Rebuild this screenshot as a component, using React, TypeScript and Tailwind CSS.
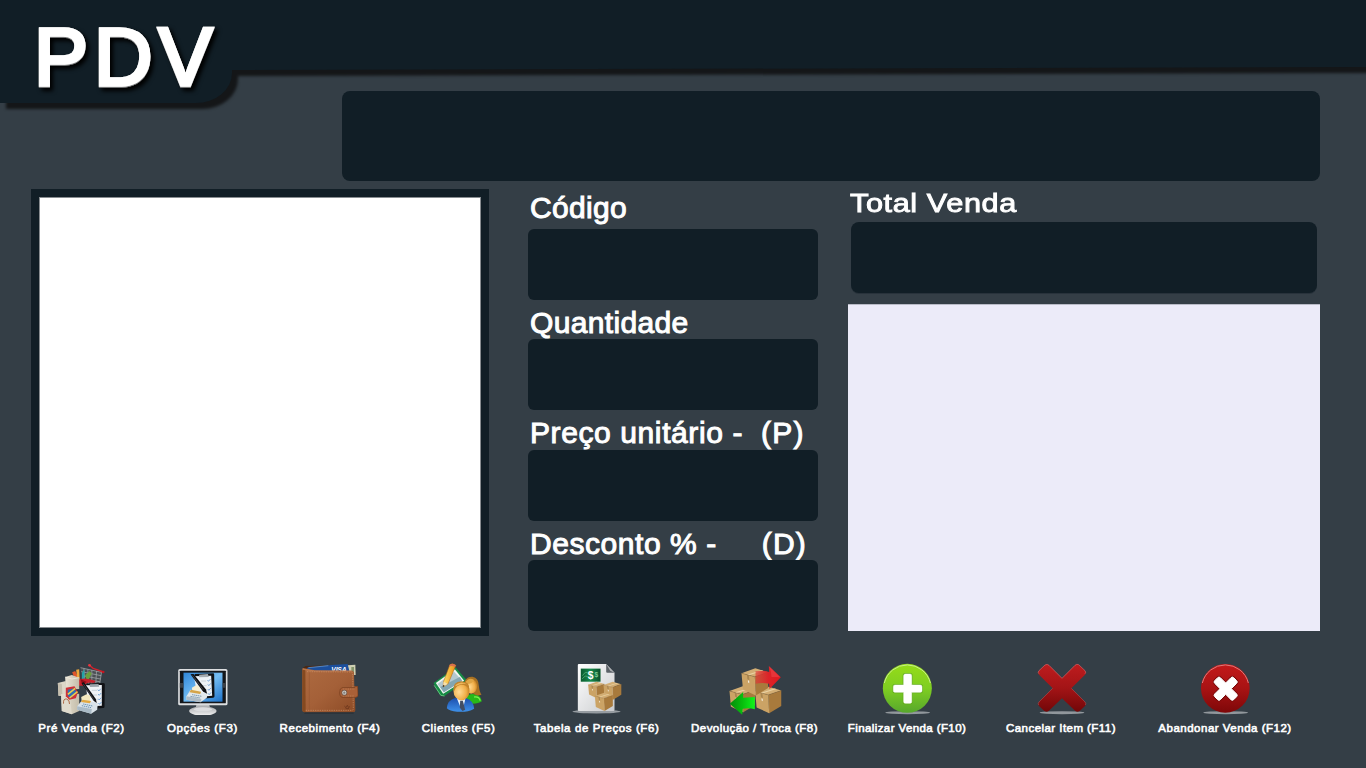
import type { ReactNode } from 'react';

const FONT = "font-['Liberation_Sans',Arial,sans-serif]";

const PLUS =
  'M196 57 H210 Q215 57 215 62 V90 H241 Q246 90 246 95 V107 Q246 112 241 112 H215 V140 Q215 145 210 145 H196 Q191 145 191 140 V112 H165 Q160 112 160 107 V95 Q160 90 165 90 H191 V62 Q191 57 196 57 Z';
const TIMES =
  'M233 68 Q237 64 241 68 L257 84 L273 68 Q277 64 281 68 L290 77 Q294 81 290 85 L274 101 L290 117 Q294 121 290 125 L281 134 Q277 138 273 134 L257 118 L241 134 Q237 138 233 134 L224 125 Q220 121 224 117 L240 101 L224 85 Q220 81 224 77 Z';

function PreVendaIcon() {
  return (
    <svg viewBox="64.5 24 180 156" className="h-[52px] w-[60px]">
      <defs>
        <linearGradient id="bag" x1="0" x2="1">
          <stop offset="0" stopColor="#e9e4d6" />
          <stop offset="1" stopColor="#c4bdaa" />
        </linearGradient>
      </defs>
      <path d="M150 38 L213 52 L208 84 L160 88 Z" fill="#4b4f53" />
      <path
        d="M150 38 L213 52 L208 84 M152 50 L212 62 M155 62 L210 72 M158 74 L208 80 M160 40 L163 86 M172 43 L174 86 M184 45 L184 86 M198 48 L196 84"
        fill="none"
        stroke="#a3a7aa"
        strokeWidth="2.2"
      />
      <path d="M176 30 L188 40 L219 51" fill="none" stroke="#d3222c" strokeWidth="4" strokeLinecap="round" />
      <circle cx="177" cy="31" r="4" fill="#e8353d" />
      <circle cx="218" cy="51" r="4" fill="#c51621" />
      <path d="M125 52 L134 48 L150 80 L138 84 Z" fill="#e0562c" />
      <path d="M137 44 L146 43 L148 80 L141 78 Z" fill="#f0a83b" />
      <path d="M154 54 L162 42 L162 76 L154 78 Z" fill="#25a3a8" />
      <path d="M164 60 L178 48 L184 56 L170 80 Z" fill="#6ba03c" />
      <path d="M140 76 Q160 64 196 78 L190 84 Q172 78 160 92 L146 92 Z" fill="#c8202b" />
      <path d="M150 72 L168 80 L156 92 Z" fill="#8e0f18" />
      <path d="M104 66 L124 60 L146 68 L146 102 L106 104 Z" fill="url(#bag)" />
      <path d="M104 66 L124 72 L146 68" fill="none" stroke="#f6f2e8" strokeWidth="2" />
      <path d="M82 84 L106 78 L108 124 L84 122 Z" fill="#ddd7c8" />
      <path d="M82 84 L94 87 L96 123 L84 122 Z" fill="#c5beae" />
      <path d="M92 118 L146 116 L146 168 L124 178 L94 168 Z" fill="url(#bag)" />
      <path d="M92 118 L118 126 L124 178 L94 168 Z" fill="#e0dbcd" />
      <path d="M106 98 L132 94 L142 112 L136 130 L116 134 L106 124 Z" fill="#cf3038" />
      <path d="M112 104 L132 100 L138 114 L120 130 L112 122 Z" fill="#2f6fb4" />
      <path d="M112 118 L134 100 M117 129 L141 110" stroke="#f0cf48" strokeWidth="4.5" />
      <path d="M99 146 Q98 130 108 132 Q118 134 117 147" fill="none" stroke="#a3542d" strokeWidth="2.5" />
      <path d="M168 86 L218 84 Q223 84 223 88 L222 155 Q222 159 218 159 L180 162 Z" fill="#101216" />
      <path d="M166 91 L214 90 L214 152 L174 154 Z" fill="#eef2f7" />
      <path d="M178 88 L204 87 L206 95 L178 96 Z" fill="#9ba3ab" />
      <path d="M184 106 H200 M184 120 H200 M186 134 H202 M188 146 H202" stroke="#b7c1ca" strokeWidth="2" />
      <path
        d="M202 104 l3 4 l6 -7 M203 117 l3 4 l6 -7 M203 131 l3 4 l6 -7 M204 144 l3 4 l6 -7"
        fill="none"
        stroke="#4586cb"
        strokeWidth="2"
      />
      <path d="M152 126 L168 118 L180 122 L178 138 L154 140 Z" fill="#f4e9bf" />
      <path d="M140 154 L156 134 L202 144 L200 164 L182 176 L140 164 Z" fill="#d9e2e9" />
      <path d="M140 154 L184 162 L182 176 L140 164 Z" fill="#a9bac6" />
      <path d="M156 134 L182 138 L178 145 L151 141 Z" fill="#e2a840" />
      <path d="M158 147 L186 153 M154 152 L182 158" stroke="#6793b5" strokeWidth="3" strokeDasharray="4 2" />
      <path d="M153 84 L160 82 L196 132 L199 144 L190 138 Z" fill="#0b0c10" />
      <path d="M158 86 L190 134" stroke="#6c727a" strokeWidth="1.5" />
    </svg>
  );
}

function OpcoesIcon() {
  return (
    <svg viewBox="427.5 24 180 156" className="h-[52px] w-[60px]">
      <defs>
        <linearGradient id="screen" x1="0" y1="0" x2="1" y2="1">
          <stop offset="0" stopColor="#2f86d8" />
          <stop offset=".5" stopColor="#74bdf3" />
          <stop offset="1" stopColor="#1d72c9" />
        </linearGradient>
        <linearGradient id="stand" x1="0" x2="0" y1="0" y2="1">
          <stop offset="0" stopColor="#a9abae" />
          <stop offset="1" stopColor="#f1f1f2" />
        </linearGradient>
      </defs>
      <path d="M498 148 H536 L540 166 H494 Z" fill="#b6b8bb" />
      <ellipse cx="517" cy="168" rx="41" ry="14" fill="url(#stand)" />
      <ellipse cx="517" cy="163" rx="28" ry="6" fill="#dcdddf" />
      <rect x="443" y="42" width="148" height="109" rx="5" fill="#dcdee0" />
      <rect x="448" y="47" width="138" height="98" rx="2" fill="#13161a" />
      <rect x="459" y="53" width="117" height="87" fill="url(#screen)" />
      <path d="M448 84 h10 v14 h-10 Z M577 84 h9 v14 h-9 Z" fill="#3c4045" />
      <path d="M492 57 L548 55 Q551 55 551 59 L552 124 Q552 128 548 128 L512 131 Z" fill="#0f1216" />
      <path d="M490 64 L542 62 L545 122 L502 126 Z" fill="#edf2f7" />
      <path d="M506 59 L532 57 L535 66 L506 67 Z" fill="#a6adb3" />
      <path d="M512 78 H527 M513 92 H528 M514 106 H529 M515 117 H528" stroke="#b9c3cc" strokeWidth="2" />
      <path
        d="M531 75 l3 4 l6 -7 M532 88 l3 4 l6 -7 M532 102 l3 4 l6 -7 M533 115 l3 4 l6 -7"
        fill="none"
        stroke="#4786cc"
        strokeWidth="2"
      />
      <path d="M484 98 L498 90 L508 94 L508 108 L486 110 Z" fill="#f7efd2" />
      <path d="M468 124 L480 104 L531 116 L529 128 L510 142 L468 134 Z" fill="#e0e7eb" />
      <path d="M468 124 L513 132 L510 142 L468 134 Z" fill="#aebbc5" />
      <path d="M481 104 L512 110 L509 117 L477 112 Z" fill="#d5a448" />
      <path d="M485 119 L514 124 M480 124 L510 129" stroke="#7191a8" strokeWidth="3" strokeDasharray="4 2" />
      <path d="M480 58 L489 57 L526 103 L530 116 L518 110 Z" fill="#0c0d11" />
      <path d="M486 61 L518 104" stroke="#737a82" strokeWidth="1.5" />
    </svg>
  );
}

function WalletIcon() {
  return (
    <svg viewBox="105 24 180 156" className="h-[52px] w-[60px]">
      <defs>
        <linearGradient id="leather" x1="0" x2="1" y1="0" y2="1">
          <stop offset="0" stopColor="#ad6a40" />
          <stop offset=".5" stopColor="#a46038" />
          <stop offset="1" stopColor="#8b4a25" />
        </linearGradient>
      </defs>
      <path d="M114 38 L122 33 L250 30 L270 34 L272 60 L116 60 Z" fill="#4a2814" />
      <path d="M248 31 L271 29 L272 60 L250 60 Z" fill="#cfd0b4" />
      <path d="M259 36 h8 v20 h-8 Z" fill="#84966c" />
      <path d="M126 38 L198 30 L248 27 L253 48 L130 50 Z" fill="#1c4f9d" />
      <path d="M130 38 L190 32" stroke="#6fa5db" strokeWidth="2" />
      <text
        x="199"
        y="50"
        fontSize="20"
        fontWeight="700"
        fontStyle="italic"
        fill="#fff"
        fontFamily="Liberation Sans"
        textLength="46"
      >
        VISA
      </text>
      <path
        d="M112 42 Q113 37 117 40 L150 46 L262 47 L267 51 L268 94 Q275 92 278 94 L279 123 Q275 128 270 127 L271 166 Q271 172 265 172 L118 172 Q112 171 112 165 Z"
        fill="url(#leather)"
      />
      <path d="M112 42 L121 44 L122 171 L118 172 Q112 171 112 165 Z" fill="#85491f" />
      <path d="M133 47 V170" stroke="#95552f" strokeWidth="1.5" />
      <path
        d="M126 50 L258 51 Q263 51 263 56 L265 161 Q265 166 260 166 L119 166"
        fill="none"
        stroke="#d19a70"
        strokeWidth="1.8"
        strokeDasharray="4 3"
      />
      <path d="M113 43 L149 48 L262 48" fill="none" stroke="#c58357" strokeWidth="2" />
      <path
        d="M232 98 L268 98 Q272 93 278 94 L279 123 Q273 129 266 127 L232 127 Q224 126 224 112 Q224 99 232 98 Z"
        fill="#a96037"
        stroke="#653015"
        strokeWidth="1.5"
      />
      <path d="M234 102 H270 M234 123 H269" stroke="#d09a70" strokeWidth="1.5" strokeDasharray="4 3" />
      <circle cx="238" cy="113" r="8.5" fill="#6c5041" />
      <circle cx="238" cy="113" r="6.5" fill="#d1cfca" />
      <circle cx="238" cy="113" r="3.5" fill="#85827e" />
      <path d="M238 153 l5 5 l4 -7 l4 7 l4 -4 M242 161 h10" fill="none" stroke="#63301a" strokeWidth="2" />
      <path d="M118 174 H266" stroke="#242b31" strokeWidth="3" />
    </svg>
  );
}

function ClientesIcon() {
  return (
    <svg viewBox="490.5 24 180 156" className="h-[52px] w-[60px]">
      <defs>
        <radialGradient id="skin" cx=".35" cy=".55" r=".75">
          <stop offset="0" stopColor="#ffdc96" />
          <stop offset=".6" stopColor="#f0ae48" />
          <stop offset="1" stopColor="#b06c14" />
        </radialGradient>
        <linearGradient id="suit" x1="0" x2="0" y1="0" y2="1">
          <stop offset="0" stopColor="#1d4fae" />
          <stop offset="1" stopColor="#3e91ea" />
        </linearGradient>
        <linearGradient id="pencil" x1="0" x2="1">
          <stop offset="0" stopColor="#ffe06a" />
          <stop offset="1" stopColor="#e88f12" />
        </linearGradient>
      </defs>
      <path d="M504 84 L570 37 L604 76 L537 123 L524 121 Z" fill="#168b45" />
      <path d="M506 91 L526 121 L537 123" fill="none" stroke="#5fc87b" strokeWidth="3" />
      <path d="M511 84 L568 43 L596 77 L533 116 Z" fill="#f2f6f3" />
      <path d="M516 87 L566 50 L590 77 L535 112 Z" fill="#b4c8cf" />
      <path d="M524 96 L583 66 L590 77 L535 112 Z" fill="#83a6b2" />
      <path d="M553 29 Q562 23 571 31 L548 86 L533 96 L534 80 Z" fill="url(#pencil)" stroke="#a75e17" strokeWidth="1.5" />
      <path d="M553 29 Q562 23 571 31 L568 37 Q560 30 550 36 Z" fill="#d8704e" />
      <path d="M534 80 L547 86 L533 96 Z" fill="#f6dfad" />
      <path d="M533 90 L538 92 L532 97 Z" fill="#28231f" />
      <path d="M598 132 Q606 117 622 117 Q646 118 649 139 Q636 149 606 145 Z" fill="#28b818" />
      <path d="M626 126 Q641 124 644 137" fill="none" stroke="#7cf150" strokeWidth="4" />
      <path
        d="M598 78 Q605 64 621 65 Q639 68 640 92 Q642 111 648 119 Q632 125 622 115 L600 110 Z"
        fill="#a87122"
      />
      <ellipse cx="617" cy="94" rx="18" ry="22" fill="url(#skin)" />
      <path d="M600 80 Q612 65 625 75 Q621 87 604 87 Z" fill="#dfa544" />
      <path
        d="M544 160 Q546 135 569 129 L601 129 Q624 136 626 161 Q604 173 575 170 Q552 169 544 160 Z"
        fill="url(#suit)"
      />
      <path d="M574 130 L600 130 L593 160 L586 160 Z" fill="#e9f1fa" />
      <path d="M584 137 L592 137 L599 164 L591 168 L583 158 Z" fill="#424d63" />
      <ellipse cx="588" cy="108" rx="24" ry="28" fill="url(#skin)" />
      <path d="M564 106 Q561 80 588 79 Q614 80 611 104 Q604 89 588 89 Q573 89 566 108 Z" fill="#c2832a" />
      <path d="M570 90 Q586 76 604 88 Q588 83 570 94 Z" fill="#eab85e" />
    </svg>
  );
}

function Box({ x, y, s = 1 }: { x: number; y: number; s?: number }) {
  return (
    <g transform={`translate(${x} ${y}) scale(${s})`}>
      <path d="M0 10 L28 0 L54 8 L27 17 Z" fill="#d3ae74" />
      <path d="M0 10 L27 17 L29 55 L3 43 Z" fill="#cba365" />
      <path d="M27 17 L54 8 L54 40 L29 55 Z" fill="#a87a3c" />
      <path d="M11 13 L40 4 L44 5 L15 14 Z" fill="#ead3a5" />
      <path d="M11 13 L15 14 L16 24 L12 22 Z" fill="#a98650" />
      <path d="M13 24 l2.5 1 l.3 5 l-2.5 -1.2 Z" fill="#f3ecdd" />
      <path d="M0 10 L27 17 L54 8" fill="none" stroke="#8a6636" strokeWidth=".8" />
      <path d="M27 17 L29 55" fill="none" stroke="#d9b67c" strokeWidth=".6" />
    </g>
  );
}

function TabelaIcon() {
  return (
    <svg viewBox="124.5 24 180 156" className="h-[52px] w-[60px]">
      <defs>
        <linearGradient id="paper" x1="0" x2="1" y1="0" y2="1">
          <stop offset="0" stopColor="#ffffff" />
          <stop offset="1" stopColor="#c9cbce" />
        </linearGradient>
        <linearGradient id="bill" x1="0" x2="1">
          <stop offset="0" stopColor="#0b5a31" />
          <stop offset=".5" stopColor="#168a4b" />
          <stop offset="1" stopColor="#0b4f2c" />
        </linearGradient>
      </defs>
      <ellipse cx="213" cy="170" rx="72" ry="5.5" fill="#969ca1" />
      <path
        d="M160 27 H242 L267 53 V165 Q267 168 264 168 H160 Q157 168 157 165 V30 Q157 27 160 27 Z"
        fill="url(#paper)"
      />
      <path d="M242 27 L267 53 H245 Q242 53 242 50 Z" fill="#5c6268" />
      <path d="M242 27 L267 53 L254 47 Z" fill="#aeb1b4" />
      <rect x="165" y="40" width="61" height="41" fill="#d6eadb" />
      <rect x="166" y="41" width="59" height="39" fill="url(#bill)" />
      <path d="M171 62 Q182 44 190 58 M170 72 Q181 56 190 69" fill="none" stroke="#62ba83" strokeWidth="2" />
      <text x="187" y="72" fontSize="31" fontWeight="700" fill="#fff" fontFamily="Liberation Sans">
        $
      </text>
      <text x="207" y="67" fontSize="20" fontWeight="700" fill="#79c795" fontFamily="Liberation Sans">
        $
      </text>
      <Box x={188} y={80} s={0.9} />
      <Box x={234} y={80} s={0.99} />
      <Box x={208} y={113} s={1} />
    </svg>
  );
}

function DevolucaoIcon() {
  return (
    <svg viewBox="598.5 24 180 156" className="h-[52px] w-[60px]">
      <defs>
        <linearGradient id="red-arrow" x1="0" x2="1">
          <stop offset="0" stopColor="#dd3a36" stopOpacity=".65" />
          <stop offset=".5" stopColor="#dc2429" />
          <stop offset="1" stopColor="#df171e" />
        </linearGradient>
        <linearGradient id="green-arrow" x1="0" x2="1">
          <stop offset="0" stopColor="#078a0b" />
          <stop offset=".5" stopColor="#07be0d" />
          <stop offset="1" stopColor="#0ff51b" />
        </linearGradient>
      </defs>
      <Box x={612} y={94} s={1.42} />
      <Box x={689} y={95} s={1.45} />
      <Box x={648} y={40} s={1.48} />
      <path d="M690 49 Q711 45 731 51 L730 33 L766 67 L732 102 L731 86 Q710 82 690 86 Z" fill="url(#red-arrow)" />
      <path d="M731 34 L764 67 L738 66 Q738 51 731 34 Z" fill="#f04b50" opacity=".5" />
      <path d="M688 126 L653 128 V111 L613 146 L650 179 L652 161 Q671 157 688 163 Z" fill="url(#green-arrow)" />
    </svg>
  );
}

function FinalizarIcon() {
  return (
    <svg viewBox="111 24 180 156" className="h-[52px] w-[60px]">
      <defs>
        <linearGradient id="green" x1="0" x2="0" y1="0" y2="1">
          <stop offset="0" stopColor="#96dc18" />
          <stop offset=".5" stopColor="#7fce22" />
          <stop offset="1" stopColor="#57a72c" />
        </linearGradient>
      </defs>
      <ellipse cx="203" cy="173" rx="67" ry="4.5" fill="#91979c" />
      <circle cx="202" cy="100" r="73.5" fill="url(#green)" />
      <path d="M133 84 A71 71 0 0 1 271 84" fill="none" stroke="#c8ee8b" strokeWidth="3" />
      <path d={PLUS} fill="none" stroke="#61ad1b" strokeWidth="6" />
      <path d={PLUS} fill="#fff" stroke="#fff" strokeWidth="1.5" />
    </svg>
  );
}

function CancelarIcon() {
  return (
    <svg viewBox="573 24 180 156" className="h-[52px] w-[60px]">
      <defs>
        <linearGradient id="cross" x1="0" x2="0" y1="0" y2="1">
          <stop offset="0" stopColor="#bd1c1e" />
          <stop offset=".5" stopColor="#a31416" />
          <stop offset="1" stopColor="#720708" />
        </linearGradient>
      </defs>
      <ellipse cx="666" cy="173" rx="67" ry="4.5" fill="#91979c" />
      <path
        d="M616 29 Q622 26 627 31 L666 70 L705 31 Q710 26 716 29 L735 47 Q740 53 735 59 L694 100 L735 141 Q740 147 735 153 L719 168 Q712 173 706 168 L666 130 L626 168 Q620 173 613 168 L597 153 Q592 147 597 141 L638 100 L597 59 Q592 53 597 47 Z"
        fill="url(#cross)"
      />
      <path
        d="M597 56 Q592 52 597 47 L615 30 Q622 26 627 31 L666 70 L705 31 Q710 26 716 29 L735 47 Q739 52 735 56"
        fill="none"
        stroke="#d76567"
        strokeWidth="2"
      />
      <path
        d="M638 100 L597 141 Q593 145 596 150 M694 100 L735 141 Q739 145 736 150"
        fill="none"
        stroke="#c35355"
        strokeWidth="1.5"
      />
    </svg>
  );
}

function AbandonarIcon() {
  return (
    <svg viewBox="165 24 180 156" className="h-[52px] w-[60px]">
      <defs>
        <linearGradient id="red" x1="0" x2="0" y1="0" y2="1">
          <stop offset="0" stopColor="#c3191a" />
          <stop offset=".5" stopColor="#a81314" />
          <stop offset="1" stopColor="#7e0708" />
        </linearGradient>
      </defs>
      <ellipse cx="257" cy="173" rx="67" ry="4.5" fill="#91979c" />
      <circle cx="256" cy="100" r="73" fill="url(#red)" />
      <path d="M187 84 A71 71 0 0 1 325 84" fill="none" stroke="#e07a7a" strokeWidth="3" />
      <path d={TIMES} fill="none" stroke="#790a0b" strokeWidth="7" />
      <path d={TIMES} fill="#fff" stroke="#fff" strokeWidth="3" />
    </svg>
  );
}

type Action = { label: string; cell: string; icon: ReactNode };

const ACTIONS: Action[] = [
  { label: 'Pré Venda (F2)', cell: 'w-[87px] tracking-[0.6px]', icon: <PreVendaIcon /> },
  { label: 'Opções (F3)', cell: 'ml-[42px] w-[71px] tracking-[0.65px]', icon: <OpcoesIcon /> },
  { label: 'Recebimento (F4)', cell: 'ml-[42px] w-[100px] tracking-[0.55px]', icon: <WalletIcon /> },
  { label: 'Clientes (F5)', cell: 'ml-[42px] w-[73px] tracking-[0.6px]', icon: <ClientesIcon /> },
  { label: 'Tabela de Preços (F6)', cell: 'ml-[39px] w-[125px] tracking-[0.6px]', icon: <TabelaIcon /> },
  { label: 'Devolução / Troca (F8)', cell: 'ml-[32px] w-[127px] tracking-[0.45px]', icon: <DevolucaoIcon /> },
  { label: 'Finalizar Venda (F10)', cell: 'ml-[30px] w-[118px] tracking-[0.4px]', icon: <FinalizarIcon /> },
  { label: 'Cancelar Item (F11)', cell: 'ml-[40px] w-[110px] tracking-[0.45px]', icon: <CancelarIcon /> },
  { label: 'Abandonar Venda (F12)', cell: 'ml-[42px] w-[134px] tracking-[0.5px]', icon: <AbandonarIcon /> },
];

function Field({ label, hint, head, gap }: { label: string; hint?: string; head: string; gap?: string }) {
  return (
    <div>
      <div
        className={`flex overflow-hidden pl-[2px] text-[30px] leading-[36px] whitespace-pre text-white [-webkit-text-stroke:1px_white] ${head}`}
      >
        <span>{label}</span>
        {hint && <span className={gap}>{hint}</span>}
      </div>
      <div className="h-[71px] w-[290px] rounded-[6px] bg-[#111e26]" />
    </div>
  );
}

export default function App() {
  return (
    <div className={`h-[768px] w-[1366px] overflow-hidden bg-[#343e46] ${FONT}`}>
      <header className="h-[91px] [filter:drop-shadow(6px_6px_1.5px_#141618)]">
        <div className="h-[70px] bg-[#111e26] [clip-path:polygon(0_0,100%_0,100%_67px,17%_70px,0_70px)]" />
        <div className="-mt-[70px] h-[103px] w-[232px] rounded-br-[36px_30px] bg-[#111e26] pt-[11px] pl-[34px]">
          <h1 className="text-[81px] leading-[92px] font-normal tracking-[6px] whitespace-nowrap text-white [-webkit-text-stroke:3.5px_white] [filter:drop-shadow(0.7px_0.7px_0_#c4c6c7)_drop-shadow(0.8px_1px_0.3px_#77797a)_drop-shadow(3px_3px_2px_#000)]">
            PDV
          </h1>
        </div>
      </header>

      <div className="ml-[342px] h-[90px] w-[978px] rounded-[8px] bg-[#111e26]" />

      <main className="flex h-[455px]">
        <div className="mt-[8px] ml-[31px] h-[447px] w-[458px] shrink-0 border-8 border-[#111e26] bg-[#111e26]">
          <div className="h-full w-full border border-[#878c90] bg-white" />
        </div>

        <section className="ml-[39px] w-[290px] shrink-0 pt-[8px]">
          <Field label="Código" head="h-[40px] pt-[1px] tracking-[0.3px]" />
          <Field label="Quantidade" head="h-[39px] pt-[5px] tracking-[0.35px]" />
          <Field
            label="Preço unitário -"
            hint="(P)"
            gap="ml-[18px] tracking-[1.2px]"
            head="h-[40px] pt-[5px] tracking-[0.6px]"
          />
          <Field label="Desconto % -" hint="(D)" gap="ml-[45px] tracking-[1.2px]" head="h-[39px] pt-[5px] tracking-[0.55px]" />
        </section>

        <section className="ml-[30px] w-[472px] shrink-0 pt-[8px]">
          <div className="h-[33px] pl-[2px]">
            <span className="-mt-px inline-block origin-left scale-x-[1.18] text-[26px] leading-[30px] tracking-[0.5px] whitespace-nowrap text-white [-webkit-text-stroke:0.9px_white]">
              Total Venda
            </span>
          </div>
          <div className="ml-[3px] h-[71px] w-[466px] rounded-[8px] bg-[#111e26] shadow-[0_1px_0_#28323b]" />
          <div className="mt-[11px] h-[327px] border-t border-[#b9bbc7] bg-[#ecebf9]" />
        </section>
      </main>

      <nav className="flex pt-[27px] pl-[38px]">
        {ACTIONS.map((a) => (
          <button key={a.label} className={`flex shrink-0 flex-col items-center ${a.cell}`}>
            {a.icon}
            <span className="mt-[6px] text-[11.5px] leading-[14px] whitespace-nowrap text-white [-webkit-text-stroke:0.6px_white]">
              {a.label}
            </span>
          </button>
        ))}
      </nav>
    </div>
  );
}
